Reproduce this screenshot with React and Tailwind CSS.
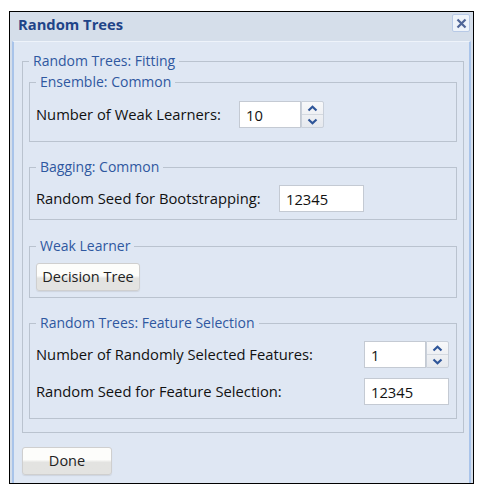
import { useState } from 'react';

function Spinner() {
  return (
    <div className="flex flex-col w-[23px] h-[27px] border border-[#c9d0da] bg-gradient-to-b from-[#f7f8fa] to-[#e6e9ee] rounded-r-[2px]">
      <div className="flex-1 flex items-center justify-center border-b border-[#d4d9e0]">
        <svg width="11" height="7" viewBox="0 0 11 7">
          <path d="M1.5 5.5 L5.5 1.8 L9.5 5.5" fill="none" stroke="#2e5599" strokeWidth="2.2" />
        </svg>
      </div>
      <div className="flex-1 flex items-center justify-center">
        <svg width="11" height="7" viewBox="0 0 11 7">
          <path d="M1.5 1.5 L5.5 5.2 L9.5 1.5" fill="none" stroke="#2e5599" strokeWidth="2.2" />
        </svg>
      </div>
    </div>
  );
}

function Group({ title, children, className }) {
  return (
    <fieldset className={'border border-[#bac3cf] pl-[6px] pr-[6px] ' + (className || '')}>
      <legend className="px-[4px] text-[14px] leading-[18px] text-[#2f58a0]">{title}</legend>
      {children}
    </fieldset>
  );
}

function Button({ label, className }) {
  return (
    <button className={'h-[28px] border border-[#cfcfcf] rounded-[3px] bg-gradient-to-b from-[#fdfdfb] from-45% to-[#e3e3e1] to-55% text-[14.5px] text-[#222] shadow-[0_1px_1px_rgba(0,0,0,0.08)] ' + (className || '')}>
      {label}
    </button>
  );
}

export default function App() {
  const [learners, setLearners] = useState('10');
  const [seed, setSeed] = useState('12345');
  const [features, setFeatures] = useState('1');
  const [featureSeed, setFeatureSeed] = useState('12345');

  const inputCls = 'h-[27px] border border-[#c4cad3] bg-white px-[6px] text-[14.75px] text-[#111] outline-none';
  const rowCls = 'flex items-center text-[14.75px] text-[#111]';

  return (
    <div className="w-[478px] h-[492px] bg-white pt-[11px] pl-[9px]" style={{ fontFamily: '"Open Sans", "Noto Sans", sans-serif' }}>
      <div className="w-[465px] h-[473px] border border-black bg-[#d5deea] flex flex-col">
        <div className="h-[29px] flex items-start justify-between pl-[8px] pr-[3px] pt-[2px]">
          <span className="text-[14.75px] leading-[20px] font-bold text-[#1f4488]">Random Trees</span>
          <div className="w-[18px] h-[18px] flex items-center justify-center border border-[#b7c9e6] bg-[#eef3fa] rounded-[2px]">
            <svg width="11" height="11" viewBox="0 0 11 11">
              <path d="M1.5 1.5 L9.5 9.5 M9.5 1.5 L1.5 9.5" stroke="#4f6597" strokeWidth="2.2" />
            </svg>
          </div>
        </div>
        <div className="flex-1 mx-[2px] border-x-2 border-t border-x-[#a9c4ea] border-t-[#eef3fa] bg-[#dfe7f3] pt-[10px] pl-[8px] pr-[5px] flex flex-col">
          <Group title="Random Trees: Fitting" className="pb-[13px]">
            <Group title="Ensemble: Common" className="mt-[3px] pt-[10px] pb-[13px]">
              <div className={rowCls}>
                <span className="w-[203px]">Number of Weak Learners:</span>
                <input className={inputCls + ' w-[62px]'} value={learners} onChange={(e) => setLearners(e.target.value)} />
                <Spinner />
              </div>
            </Group>
            <Group title="Bagging: Common" className="mt-[16px] pt-[9px] pb-[7px]">
              <div className={rowCls}>
                <span className="w-[243px]">Random Seed for Bootstrapping:</span>
                <input className={inputCls + ' w-[85px]'} value={seed} onChange={(e) => setSeed(e.target.value)} />
              </div>
            </Group>
            <Group title="Weak Learner" className="mt-[17px] pt-[8px] pb-[6px]">
              <Button label="Decision Tree" className="w-[104px]" />
            </Group>
            <Group title="Random Trees: Feature Selection" className="mt-[16px] pt-[9px] pb-[13px]">
              <div className={rowCls}>
                <span className="w-[328px]">Number of Randomly Selected Features:</span>
                <input className={inputCls + ' w-[62px]'} value={features} onChange={(e) => setFeatures(e.target.value)} />
                <Spinner />
              </div>
              <div className={rowCls + ' mt-[10px]'}>
                <span className="w-[328px]">Random Seed for Feature Selection:</span>
                <input className={inputCls + ' w-[85px]'} value={featureSeed} onChange={(e) => setFeatureSeed(e.target.value)} />
              </div>
            </Group>
          </Group>
          <div className="mt-[14px]">
            <Button label="Done" className="w-[90px]" />
          </div>
        </div>
      </div>
    </div>
  );
}
